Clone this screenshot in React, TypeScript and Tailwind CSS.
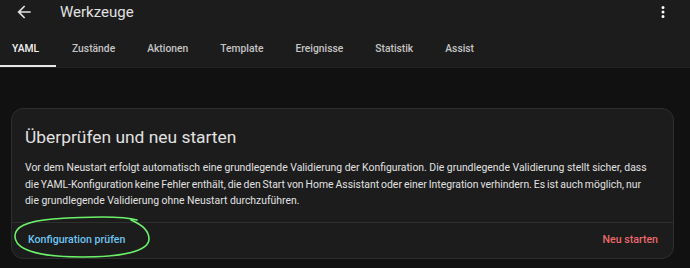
const tabs = ["YAML", "Zustände", "Aktionen", "Template", "Ereignisse", "Statistik", "Assist"];

const lines = [
  "Vor dem Neustart erfolgt automatisch eine grundlegende Validierung der Konfiguration. Die grundlegende Validierung stellt sicher, dass",
  "die YAML-Konfiguration keine Fehler enthält, die den Start von Home Assistant oder einer Integration verhindern. Es ist auch möglich, nur",
  "die grundlegende Validierung ohne Neustart durchzuführen.",
];

export default function App() {
  return (
    <div
      className="w-[690px] h-[268px] bg-[#111111] text-[#e1e1e1] overflow-hidden"
      style={{ fontFamily: "Roboto, 'Liberation Sans', sans-serif" }}
    >
      <header className="bg-[#1c1c1c] border-b border-[#222222]">
        <div className="h-[24px] flex items-center pl-[14px] pr-[18px]">
          <svg width="20" height="20" viewBox="0 0 24 24" fill="#e1e1e1">
            <path d="M20,11V13H8L13.5,18.5L12.08,19.92L4.16,12L12.08,4.08L13.5,5.5L8,11H20Z" />
          </svg>
          <h1 className="ml-[26px] text-[15px] leading-none text-[#e1e1e1]">Werkzeuge</h1>
          <svg className="ml-auto" width="18" height="18" viewBox="0 0 24 24" fill="#ffffff">
            <path d="M12,16A2,2 0 0,1 14,18A2,2 0 0,1 12,20A2,2 0 0,1 10,18A2,2 0 0,1 12,16M12,10A2,2 0 0,1 14,12A2,2 0 0,1 12,14A2,2 0 0,1 10,12A2,2 0 0,1 12,10M12,4A2,2 0 0,1 14,6A2,2 0 0,1 12,8A2,2 0 0,1 10,6A2,2 0 0,1 12,4Z" />
          </svg>
        </div>
        <nav className="flex h-[43px] items-stretch">
          {tabs.map((t, i) => (
            <div
              key={t}
              className={
                "relative flex items-center pt-[7px] text-[10.3px] font-medium " +
                (i === 0 ? "text-[#f2f2f2] w-[56px] pl-[12px]" : "text-[#c4c4c4] px-[16px]")
              }
            >
              {t}
              {i === 0 && <span className="absolute left-0 right-0 bottom-0 h-[2px] bg-[#e8e8e8]" />}
            </div>
          ))}
        </nav>
      </header>

      <div className="pt-[40px] px-[11px]">
        <section className="relative w-[663px] rounded-[12px] bg-[#1c1c1c] border border-[#2e2e2e]">
          <h2 className="px-[13px] pt-[16px] text-[17.4px] leading-[24px] text-[#e1e1e1]">
            Überprüfen und neu starten
          </h2>
          <p className="px-[13px] pt-[11px] pb-[12px] text-[10.4px] leading-[16.5px] text-[#e1e1e1]">
            {lines.map((l, i) => (
              <span
                key={i}
                className={"block whitespace-nowrap " + (i === 1 ? "[word-spacing:-0.6px]" : "")}
              >
                {l}
              </span>
            ))}
          </p>
          <div className="border-t border-[#2e2e2e] h-[36px] flex items-center justify-between pl-[16px] pr-[15px]">
            <button className="text-[10.6px] font-medium text-[#6ec4f0]">Konfiguration prüfen</button>
            <button className="text-[10.6px] font-medium text-[#e9696b]">Neu starten</button>
          </div>
          <svg
            className="absolute left-[1px] top-[106px] pointer-events-none"
            width="142"
            height="46"
            viewBox="0 0 142 46"
            fill="none"
          >
            <path
              d="M124 5 C 110 1, 70 2, 40 4 C 14 6, 1 12, 2 22 C 3 36, 30 42, 70 42 C 110 42, 136 36, 136 24 C 136 16, 130 10, 118 5"
              stroke="#6cf26a"
              strokeWidth="1.6"
              strokeLinecap="round"
            />
          </svg>
        </section>
      </div>
    </div>
  );
}
